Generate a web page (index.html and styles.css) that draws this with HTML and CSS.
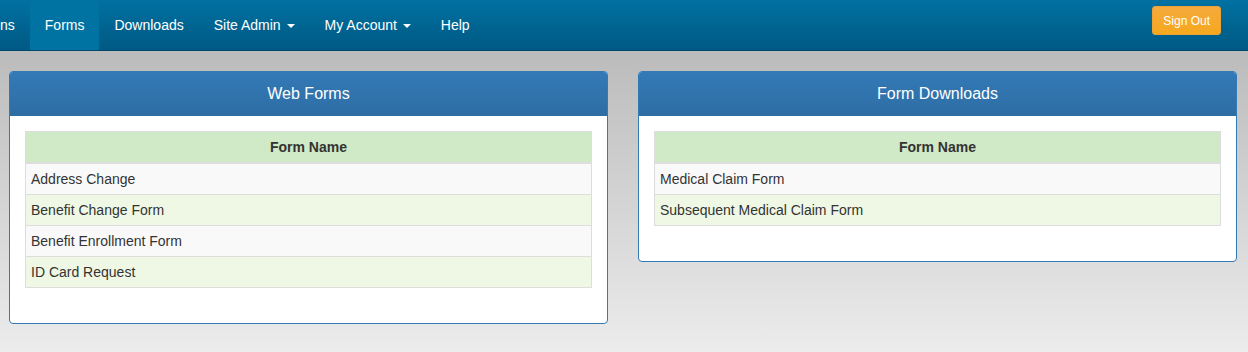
FILE: index.html
```html
<!DOCTYPE html>
<html lang="en">
<head>
    <meta charset="UTF-8">
    <meta name="viewport" content="width=device-width, initial-scale=1.0">
    <title>Forms</title>
    <link rel="stylesheet" href="styles.css">
</head>

<body>
    <nav class="navbar">
        <ul class="nav">
            <li class="first"><a href="#">ns</a></li>
            <li class="active"><a href="#">Forms</a></li>
            <li><a href="#">Downloads</a></li>
            <li><a href="#">Site Admin <span class="caret"></span></a></li>
            <li><a href="#">My Account <span class="caret"></span></a></li>
            <li><a href="#">Help</a></li>
        </ul>
        <button class="btn-signout" type="button">Sign Out</button>
    </nav>

    <div class="page">
        <div class="panel">
            <div class="panel-heading">Web Forms</div>
            <div class="panel-body">
                <table class="forms-table">
                    <thead>
                        <tr><th>Form Name</th></tr>
                    </thead>
                    <tbody>
                        <tr><td>Address Change</td></tr>
                        <tr><td>Benefit Change Form</td></tr>
                        <tr><td>Benefit Enrollment Form</td></tr>
                        <tr><td>ID Card Request</td></tr>
                    </tbody>
                </table>
            </div>
        </div>

        <div class="panel">
            <div class="panel-heading">Form Downloads</div>
            <div class="panel-body">
                <table class="forms-table">
                    <thead>
                        <tr><th>Form Name</th></tr>
                    </thead>
                    <tbody>
                        <tr><td>Medical Claim Form</td></tr>
                        <tr><td>Subsequent Medical Claim Form</td></tr>
                    </tbody>
                </table>
            </div>
        </div>
    </div>
</body>
</html>
```

FILE: styles.css
```css
html {
    min-height: 100%;
}

body {
    margin: 0;
    min-height: 352px;
    font-family: "Liberation Sans", Arial, sans-serif;
    font-size: 14px;
    line-height: 20px;
    color: #333;
    background: linear-gradient(to bottom, #b3b3b3 0%, #ececec 100%);
}

/* Top navigation */
.navbar {
    display: flex;
    justify-content: space-between;
    align-items: flex-start;
    height: 50px;
    background: linear-gradient(to bottom, #0072a2 0%, #00628f 60%, #005985 100%);
    border-bottom: 1px solid #00486c;
}

.nav {
    display: flex;
    list-style: none;
    margin: 0;
    padding: 0;
}

.nav a {
    display: block;
    padding: 15px;
    color: #fff;
    text-decoration: none;
}

.nav .first a {
    padding-left: 0;
}

.nav .active a {
    background: #0073a3;
}

.caret {
    display: inline-block;
    width: 0;
    height: 0;
    margin-left: 2px;
    vertical-align: middle;
    border-top: 4px solid #fff;
    border-left: 4px solid transparent;
    border-right: 4px solid transparent;
}

.btn-signout {
    margin: 6px 27px 0 0;
    padding: 5px 10px 4px;
    font-family: inherit;
    font-size: 12px;
    line-height: 18px;
    color: #fff;
    background: linear-gradient(to bottom, #f4aa3c 0%, #f7a81e 100%);
    border: 1px solid #eea236;
    border-radius: 3px;
    cursor: pointer;
}

/* Panels */
.page {
    display: grid;
    grid-template-columns: 1fr 1fr;
    align-items: start;
    gap: 30px;
    padding: 20px 11px 0 9px;
}

.panel {
    background: #fff;
    border: 1px solid #337ab7;
    border-radius: 4px;
    overflow: hidden;
}

.panel-heading {
    padding: 10px 15px;
    font-size: 16px;
    line-height: 24px;
    text-align: center;
    color: #fff;
    background: linear-gradient(to bottom, #337ab7 0%, #2e6da4 100%);
}

.panel-body {
    padding: 15px;
}

.forms-table {
    width: 100%;
    border-collapse: collapse;
    margin-bottom: 20px;
    border: 1px solid #ddd;
}

.forms-table th {
    padding: 5px;
    font-weight: bold;
    text-align: center;
    background: #d0e9c6;
    border-bottom: 2px solid #ddd;
}

.forms-table td {
    padding: 5px;
    text-align: left;
    border-top: 1px solid #ddd;
}

.forms-table tbody tr:nth-child(odd) td {
    background: #f9f9f9;
}

.forms-table tbody tr:nth-child(even) td {
    background: #eff8e4;
}
```
